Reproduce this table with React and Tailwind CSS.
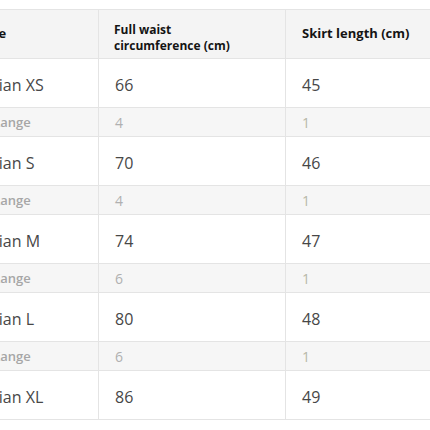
import React from "react";

const rows = [
  { size: "Asian XS", waist: "66", len: "45", rw: "4", rl: "1" },
  { size: "Asian S", waist: "70", len: "46", rw: "4", rl: "1" },
  { size: "Asian M", waist: "74", len: "47", rw: "6", rl: "1" },
  { size: "Asian L", waist: "80", len: "48", rw: "6", rl: "1" },
  { size: "Asian XL", waist: "86", len: "49" },
];

export default function App() {
  return (
    <div
      className="w-[430px] h-[430px] overflow-hidden bg-white"
      style={{ fontFamily: '"Open Sans", "Noto Sans", sans-serif' }}
    >
      <div className="ml-[-36px] w-[540px] pt-[9px]">
        <div className="grid grid-cols-[134px_187px_219px] h-[50px] bg-[#f4f4f4] border-t border-b border-[#e4e4e4] text-[#141414] font-bold">
          <div className="flex items-center pl-[17px] text-[13px]">Size</div>
          <div className="flex items-center pl-[15px] pt-[7px] border-l border-[#e4e4e4] text-[12px] leading-[16px]">
            <span>Full waist<br />circumference (cm)</span>
          </div>
          <div className="flex items-center pl-[16px] border-l border-[#e4e4e4] text-[13px]">Skirt length (cm)</div>
        </div>
        {rows.map((r, i) => (
          <React.Fragment key={i}>
            <div className="grid grid-cols-[134px_187px_219px] h-[49px] bg-white border-b border-[#e4e4e4] text-[16px] text-[#474747]">
              <div className="flex items-center pl-[17px] pt-[3px]">{r.size}</div>
              <div className="flex items-center pl-[16px] pt-[3px] border-l border-[#e4e4e4]">{r.waist}</div>
              <div className="flex items-center pl-[16px] pt-[3px] border-l border-[#e4e4e4]">{r.len}</div>
            </div>
            {r.rw && (
              <div className="grid grid-cols-[134px_187px_219px] h-[29px] bg-[#f6f6f6] border-b border-[#e4e4e4] text-[13px] text-[#a6a6a6]">
                <div className="flex items-center pl-[28px] pt-[1px] font-semibold">Range</div>
                <div className="flex items-center pl-[16px] pt-[1px] border-l border-[#e4e4e4] text-[14px] text-[#b0b0b0]">{r.rw}</div>
                <div className="flex items-center pl-[16px] pt-[1px] border-l border-[#e4e4e4] text-[14px] text-[#b8b8a8]">{r.rl}</div>
              </div>
            )}
          </React.Fragment>
        ))}
      </div>
    </div>
  );
}
